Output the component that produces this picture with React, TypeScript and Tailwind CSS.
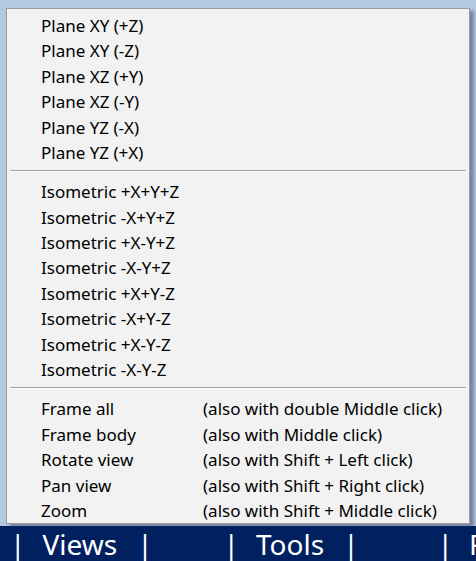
const PLANES = ['Plane XY (+Z)', 'Plane XY (-Z)', 'Plane XZ (+Y)', 'Plane XZ (-Y)', 'Plane YZ (-X)', 'Plane YZ (+X)'];

const ISOS = [
  'Isometric +X+Y+Z',
  'Isometric -X+Y+Z',
  'Isometric +X-Y+Z',
  'Isometric -X-Y+Z',
  'Isometric +X+Y-Z',
  'Isometric -X+Y-Z',
  'Isometric +X-Y-Z',
  'Isometric -X-Y-Z',
];

const ACTIONS = [
  { label: 'Frame all', hint: '(also with double Middle click)' },
  { label: 'Frame body', hint: '(also with Middle click)' },
  { label: 'Rotate view', hint: '(also with Shift + Left click)' },
  { label: 'Pan view', hint: '(also with Shift + Right click)' },
  { label: 'Zoom', hint: '(also with Shift + Middle click)' },
];

// toolbar pieces: [text, left margin]
const BAR: [string, string][] = [
  ['|', 'ml-[10px]'],
  ['Views', 'ml-[17px]'],
  ['|', 'ml-[20px]'],
  ['|', 'ml-[71px]'],
  ['Tools', 'ml-[17px]'],
  ['|', 'ml-[19px]'],
  ['|', 'ml-[79px]'],
  ['F', 'ml-[16px]'],
];

function Item({ label, hint }: { label: string; hint?: string }) {
  return (
    <div className="flex items-center h-[25.4px] pl-[34px] whitespace-nowrap">
      <span className="w-[162px]">{label}</span>
      {hint && <span>{hint}</span>}
    </div>
  );
}

function Separator() {
  return (
    <div className="h-[14px] pt-[5px] px-[3px]">
      <div className="border-t border-t-[#a0a0a0] border-b border-b-white" />
    </div>
  );
}

export default function App() {
  return (
    <div className="w-[476px] h-[561px] bg-[#b4c8e1] flex flex-col overflow-hidden" style={{ fontFamily: '"Noto Sans", "Open Sans", sans-serif' }}>
      <div className="pl-[6px] pt-[8px]">
        <div className="w-[464px] bg-[#f2f2f2] border border-[#9c9c9c] pt-[4px] text-[17px] text-black shadow-[4px_3px_3px_rgba(40,50,80,0.45)]">
          {PLANES.map(p => <Item key={p} label={p} />)}
          <Separator />
          {ISOS.map(p => <Item key={p} label={p} />)}
          <Separator />
          {ACTIONS.map(a => <Item key={a.label} label={a.label} hint={a.hint} />)}
        </div>
      </div>
      <div className="flex-1 mt-[2px] bg-[#002060] text-white text-[28px] leading-none flex items-center whitespace-nowrap">
        {BAR.map(([t, m], i) => (
          <span key={i} className={`${m} shrink-0`}>{t}</span>
        ))}
      </div>
    </div>
  );
}
